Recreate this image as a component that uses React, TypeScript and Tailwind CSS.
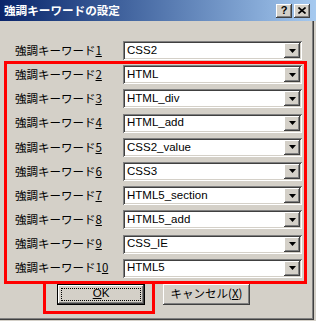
import React from 'react';

const raised =
  'shadow-[inset_-1px_-1px_#404040,inset_1px_1px_#ffffff,inset_-2px_-2px_#808080,inset_2px_2px_#d4d0c8]';
const sunken =
  'shadow-[inset_1px_1px_#808080,inset_-1px_-1px_#ffffff,inset_2px_2px_#404040,inset_-2px_-2px_#d4d0c8]';

const rows = [
  'CSS2',
  'HTML',
  'HTML_div',
  'HTML_add',
  'CSS2_value',
  'CSS3',
  'HTML5_section',
  'HTML5_add',
  'CSS_IE',
  'HTML5',
];

function DownArrow() {
  return (
    <svg width="7" height="4" viewBox="0 0 7 4" aria-hidden="true">
      <path d="M0 0h7L3.5 4z" fill="#000" />
    </svg>
  );
}

function ComboBox({ value }: { value: string }) {
  return (
    <div className={`relative flex h-[19px] w-[179px] items-center bg-white ${sunken}`}>
      <span className="pl-[4px] font-['Liberation_Sans','Noto_Sans_CJK_JP',sans-serif] text-[11.5px] leading-none text-black">
        {value}
      </span>
      <div
        className={`absolute right-[2px] top-[2px] bottom-[2px] flex w-[16px] items-center justify-center bg-[#d4d0c8] ${raised}`}
      >
        <DownArrow />
      </div>
    </div>
  );
}

// access key: last digit is underlined ("10" underlines only the 0)
function RowNumber({ n }: { n: number }) {
  const s = String(n);
  return (
    <>
      {s.slice(0, -1)}
      <span className="underline underline-offset-[1px]">{s.slice(-1)}</span>
    </>
  );
}

export default function App() {
  return (
    <div className="relative flex h-[321px] w-[316px] flex-col overflow-hidden bg-[#d4d0c8] font-['Noto_Sans_CJK_JP',sans-serif] text-black">
      {/* Title bar */}
      <div className="flex h-[21px] shrink-0 items-center bg-gradient-to-r from-[#0a246a] to-[#a6caf0] pl-[4px] pr-[6px]">
        <span className="text-[11.6px] font-bold leading-none text-white">強調キーワードの設定</span>
        <div className="ml-auto flex gap-[2px]">
          <div
            className={`flex h-[14px] w-[16px] items-center justify-center bg-[#d4d0c8] ${raised} font-['Liberation_Sans',sans-serif] text-[11px] font-bold leading-none`}
          >
            ?
          </div>
          <div className={`flex h-[14px] w-[16px] items-center justify-center bg-[#d4d0c8] ${raised}`}>
            <svg width="8" height="7" viewBox="0 0 8 7" aria-hidden="true">
              <path d="M0.5 0.5l7 6M7.5 0.5l-7 6" stroke="#000" strokeWidth="1.6" />
            </svg>
          </div>
        </div>
      </div>

      {/* Dialog body with frame */}
      <div className="mb-[1px] mr-[2px] flex flex-1 border-b border-r border-[#404040]">
        <div className="flex flex-1 flex-col border-b border-r border-[#808080] pt-[20px]">
          <div className="flex flex-col gap-[5.2px]">
            {rows.map((value, i) => (
              <div key={i} className="flex h-[19px] items-center">
                <span className="w-[123px] shrink-0 whitespace-nowrap pl-[15px] text-[11.5px] leading-none">
                  強調キーワード
                  <RowNumber n={i + 1} />
                </span>
                <ComboBox value={value} />
              </div>
            ))}
          </div>

          {/* Buttons */}
          <div className="mt-[6px] flex gap-[18px] pl-[57px]">
            <div className={`relative flex h-[21px] w-[88px] items-center justify-center border border-black bg-[#d4d0c8] ${raised}`}>
              <span className="font-['Liberation_Sans',sans-serif] text-[11.5px] leading-none">
                <span className="underline">O</span>K
              </span>
              <div className="absolute inset-[3px] border border-dotted border-black" />
            </div>
            <div className={`flex h-[21px] w-[87px] items-center justify-center bg-[#d4d0c8] ${raised}`}>
              <span className="text-[11.5px] leading-none">
                キャンセル(<span className="underline">X</span>)
              </span>
            </div>
          </div>
        </div>
      </div>

      {/* Red highlight annotations */}
      <div className="pointer-events-none absolute left-[4px] top-[61px] h-[223px] w-[303px] border-[3px] border-[#ff0000]" />
      <div className="pointer-events-none absolute left-[43px] top-[281px] h-[33px] w-[112px] border-[3px] border-[#ff0000]" />
    </div>
  );
}
